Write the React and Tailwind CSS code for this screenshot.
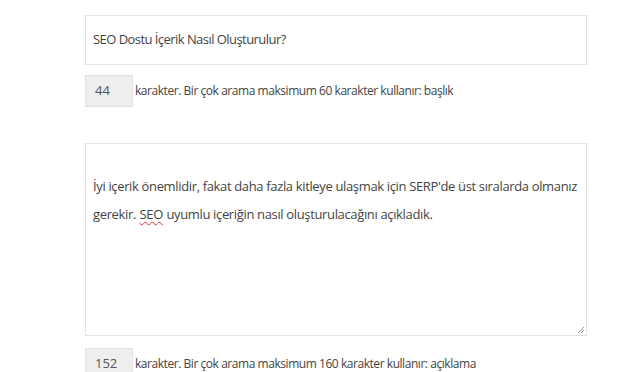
import { useState } from "react";

const font = { fontFamily: '"Open Sans", "Noto Sans", sans-serif' };

const Counter = ({ value, label }) => (
  <div className="flex items-center">
    <div className="w-[48px] h-[32px] bg-[#eeeeee] border border-[#e2e2e2] flex items-center pl-[9px] text-[13px] text-[#555]">
      {value}
    </div>
    <span className="ml-[2px] text-[12px] tracking-[-0.45px] text-[#444]">{label}</span>
  </div>
);

const App = () => {
  const [title] = useState("SEO Dostu İçerik Nasıl Oluşturulur?");

  return (
    <div className="w-[640px] h-[372px] overflow-hidden bg-white" style={font}>
      <div className="ml-[85px] w-[502px] pt-[15px]">
        <div className="h-[50px] border border-[#e3e3e3] flex items-center px-[7px] text-[13px] tracking-[-0.55px] text-[#444]">
          {title}
        </div>
        <div className="mt-[10px]">
          <Counter value="44" label="karakter. Bir çok arama maksimum 60 karakter kullanır: başlık" />
        </div>

        <div className="relative mt-[36px] h-[193px] border border-[#e3e3e3] pt-[28px] px-[7px] text-[13px] leading-[28px] tracking-[-0.35px] text-[#444] whitespace-nowrap">
          <p>İyi içerik önemlidir, fakat daha fazla kitleye ulaşmak için SERP'de üst sıralarda olmanız</p>
          <p className="flex gap-[3.5px]">
            <span>gerekir.</span>
            <span className="underline decoration-wavy decoration-[#d33] decoration-1 underline-offset-2">SEO</span>
            <span>uyumlu içeriğin nasıl oluşturulacağını açıkladık.</span>
          </p>
          <svg className="absolute right-[1px] bottom-[1px]" width="9" height="9" viewBox="0 0 9 9">
            <path d="M8 2 L2 8 M8 5 L5 8" stroke="#999" strokeWidth="1" />
          </svg>
        </div>

        <div className="mt-[12px]">
          <Counter value="152" label="karakter. Bir çok arama maksimum 160 karakter kullanır: açıklama" />
        </div>
      </div>
    </div>
  );
};

export default App;
